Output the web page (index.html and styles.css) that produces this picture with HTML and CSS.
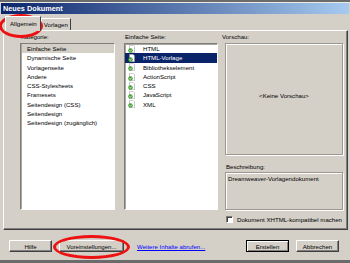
FILE: index.html
```html
<!DOCTYPE html>
<html lang="de">
<head>
    <meta charset="UTF-8">
    <meta name="viewport" content="width=device-width, initial-scale=1.0">
    <title>Neues Dokument</title>
    <link rel="stylesheet" href="styles.css">
</head>
<body>

<div class="window">
    <div class="titlebar">Neues Dokument</div>

    <div class="tabs">
        <div class="tab active">Allgemein</div>
        <div class="tab">Vorlagen</div>
    </div>

    <div class="panel">
        <div class="col col-cat">
            <div class="label">Kategorie:</div>
            <ul class="list">
                <li class="selected-grey">Einfache Seite</li>
                <li>Dynamische Seite</li>
                <li>Vorlagenseite</li>
                <li>Andere</li>
                <li>CSS-Stylesheets</li>
                <li>Framesets</li>
                <li>Seitendesign (CSS)</li>
                <li>Seitendesign</li>
                <li>Seitendesign (zugänglich)</li>
            </ul>
        </div>

        <div class="col col-type">
            <div class="label">Einfache Seite:</div>
            <ul class="list icons">
                <li><svg class="doc" viewBox="0 0 14 16"><path d="M3 .5h7l3 3v12H3z" fill="#fff" stroke="#8c8c8c"/><circle cx="5" cy="11" r="4.5" fill="#3f9c2c"/><path d="M2.8 11l1.8 1.8 2.8-3.6" fill="none" stroke="#fff" stroke-width="1.6"/></svg>HTML</li>
                <li class="selected"><svg class="doc" viewBox="0 0 14 16"><path d="M3 .5h7l3 3v12H3z" fill="#fff" stroke="#8c8c8c"/><circle cx="5" cy="11" r="4.5" fill="#3f9c2c"/><path d="M2.8 11l1.8 1.8 2.8-3.6" fill="none" stroke="#fff" stroke-width="1.6"/></svg>HTML-Vorlage</li>
                <li><svg class="doc" viewBox="0 0 14 16"><path d="M3 .5h7l3 3v12H3z" fill="#fff" stroke="#8c8c8c"/><circle cx="5" cy="11" r="4.5" fill="#3f9c2c"/><path d="M2.8 11l1.8 1.8 2.8-3.6" fill="none" stroke="#fff" stroke-width="1.6"/></svg>Bibliothekselement</li>
                <li><svg class="doc" viewBox="0 0 14 16"><path d="M3 .5h7l3 3v12H3z" fill="#fff" stroke="#8c8c8c"/><circle cx="5" cy="11" r="4.5" fill="#3f9c2c"/><path d="M2.8 11l1.8 1.8 2.8-3.6" fill="none" stroke="#fff" stroke-width="1.6"/></svg>ActionScript</li>
                <li><svg class="doc" viewBox="0 0 14 16"><path d="M3 .5h7l3 3v12H3z" fill="#fff" stroke="#8c8c8c"/><circle cx="5" cy="11" r="4.5" fill="#3f9c2c"/><path d="M2.8 11l1.8 1.8 2.8-3.6" fill="none" stroke="#fff" stroke-width="1.6"/></svg>CSS</li>
                <li><svg class="doc" viewBox="0 0 14 16"><path d="M3 .5h7l3 3v12H3z" fill="#fff" stroke="#8c8c8c"/><circle cx="5" cy="11" r="4.5" fill="#3f9c2c"/><path d="M2.8 11l1.8 1.8 2.8-3.6" fill="none" stroke="#fff" stroke-width="1.6"/></svg>JavaScript</li>
                <li><svg class="doc" viewBox="0 0 14 16"><path d="M3 .5h7l3 3v12H3z" fill="#fff" stroke="#8c8c8c"/><circle cx="5" cy="11" r="4.5" fill="#3f9c2c"/><path d="M2.8 11l1.8 1.8 2.8-3.6" fill="none" stroke="#fff" stroke-width="1.6"/></svg>XML</li>
            </ul>
        </div>

        <div class="col col-preview">
            <div class="label label-preview">Vorschau:</div>
            <div class="preview">&lt;Keine Vorschau&gt;</div>
            <div class="label label-desc">Beschreibung:</div>
            <div class="desc">Dreamweaver-Vorlagendokument</div>
            <div class="check"><span class="box"></span>Dokument XHTML-kompatibel machen</div>
        </div>
    </div>

    <div class="footer">
        <button class="btn">Hilfe</button>
        <button class="btn btn-prefs">Voreinstellungen...</button>
        <a class="more" href="#">Weitere Inhalte abrufen...</a>
        <button class="btn btn-default">Erstellen</button>
        <button class="btn">Abbrechen</button>
    </div>
</div>

<div class="mark mark-tab"></div>
<div class="mark mark-prefs"></div>

</body>
</html>
```

FILE: styles.css
```css
body {
    margin: 0;
    height: 263px;
    background-color: #6b6b6b;
    font-family: "Liberation Sans", Arial, sans-serif;
    font-size: 6.1px;
    color: #000;
    overflow: hidden;
}
.window {
    margin-top: 2px;
    height: 258px;
    box-sizing: border-box;
    padding: 0 1px;
    background-color: #d4d0c8;
    border-top: 1px solid #ecebe6;
}
.titlebar {
    height: 11px;
    line-height: 11px;
    padding-left: 2px;
    font-size: 7.3px;
    font-weight: bold;
    color: white;
    background: linear-gradient(to right, #0a246a, #a6caf0);
}
.tabs {
    display: flex;
    align-items: flex-end;
    height: 16px;
    padding-left: 4px;
}
.tab {
    height: 11px;
    line-height: 11px;
    padding: 0 2px;
    border: 1px solid;
    border-color: #fff #404040 transparent #fff;
    border-bottom: none;
}
.tab.active {
    height: 14px;
    line-height: 14px;
    padding: 0 3px 0 4px;
    margin-bottom: -1px;
    background-color: #d4d0c8;
    position: relative;
    z-index: 1;
}
.panel {
    display: flex;
    height: 200px;
    box-sizing: border-box;
    margin: 0 1px 0 2px;
    padding: 1px 4px 0 16px;
    border: 1px solid;
    border-color: #fff #404040 #404040 #fff;
    box-shadow: inset -1px -1px #808080;
}
.col {
    display: flex;
    flex-direction: column;
}
.col-cat {
    width: 95px;
}
.col-type {
    width: 94px;
    margin-left: 9px;
}
.col-preview {
    width: 118px;
    margin-left: 7px;
}
.label {
    height: 9px;
    line-height: 9px;
    margin: 0 0 2px 1px;
}
.label-preview {
    margin-left: -3px;
}
.label-desc {
    margin: 7px 0 1px 1px;
}
.list {
    list-style: none;
    margin: 0;
    padding: 0;
    height: 167px;
    box-sizing: border-box;
    background-color: white;
    border: 1px solid;
    border-color: #7f7d78 #fff #fff #7f7d78;
    box-shadow: inset 1px 1px #a8a59e;
}
.list li {
    height: 9.3px;
    line-height: 9.3px;
    padding-left: 6px;
    white-space: nowrap;
}
.list .selected-grey {
    background-color: #d4d0c8;
    margin-left: 1px;
    padding-left: 5px;
}
.icons li {
    display: flex;
    align-items: center;
    padding-left: 3px;
}
.icons .selected {
    background-color: #0a246a;
    color: white;
}
.doc {
    width: 7px;
    height: 8px;
    margin-right: 8px;
    flex-shrink: 0;
}
.preview {
    height: 112px;
    box-sizing: border-box;
    display: flex;
    align-items: center;
    justify-content: center;
    padding-bottom: 8px;
    border: 1px solid #9c9991;
    box-shadow: inset 1px 1px #fff, 1px 1px #fff;
}
.desc {
    height: 38px;
    box-sizing: border-box;
    padding: 1px 2px;
    line-height: 9px;
    border: 1px solid #9c9991;
    box-shadow: inset 1px 1px #fff, 1px 1px #fff;
}
.check {
    display: flex;
    align-items: center;
    height: 9px;
    margin-top: 5px;
    margin-left: 1px;
    white-space: nowrap;
}
.box {
    width: 7px;
    height: 7px;
    box-sizing: border-box;
    margin-right: 4px;
    background-color: white;
    border: 1px solid;
    border-color: #7f7d78 #fff #fff #7f7d78;
    box-shadow: inset 1px 1px #404040;
}
.footer {
    display: flex;
    align-items: center;
    height: 30px;
    box-sizing: border-box;
    padding: 10px 10px 8px 8px;
}
.btn {
    height: 12px;
    width: 43px;
    padding: 0;
    font-family: inherit;
    font-size: 6.1px;
    color: #000;
    background-color: #d4d0c8;
    border: 1px solid;
    border-color: #fff #404040 #404040 #fff;
    box-shadow: inset -1px -1px #808080;
    margin-right: 7px;
}
.btn-prefs {
    width: 65px;
}
.btn-default {
    margin-left: auto;
    border-color: #000;
    box-shadow: inset 1px 1px #fff, inset -1px -1px #808080;
}
.btn:last-child {
    margin-right: 0;
}
.more {
    margin-left: 6px;
    color: #0000ff;
    text-decoration: underline;
    white-space: nowrap;
}
.mark {
    position: absolute;
    box-sizing: border-box;
    border: 3px solid #ee1111;
    border-radius: 50%;
}
.mark-tab {
    left: -1px;
    top: 14px;
    width: 44px;
    height: 24px;
}
.mark-prefs {
    left: 53px;
    top: 235px;
    width: 77px;
    height: 24px;
}
```
